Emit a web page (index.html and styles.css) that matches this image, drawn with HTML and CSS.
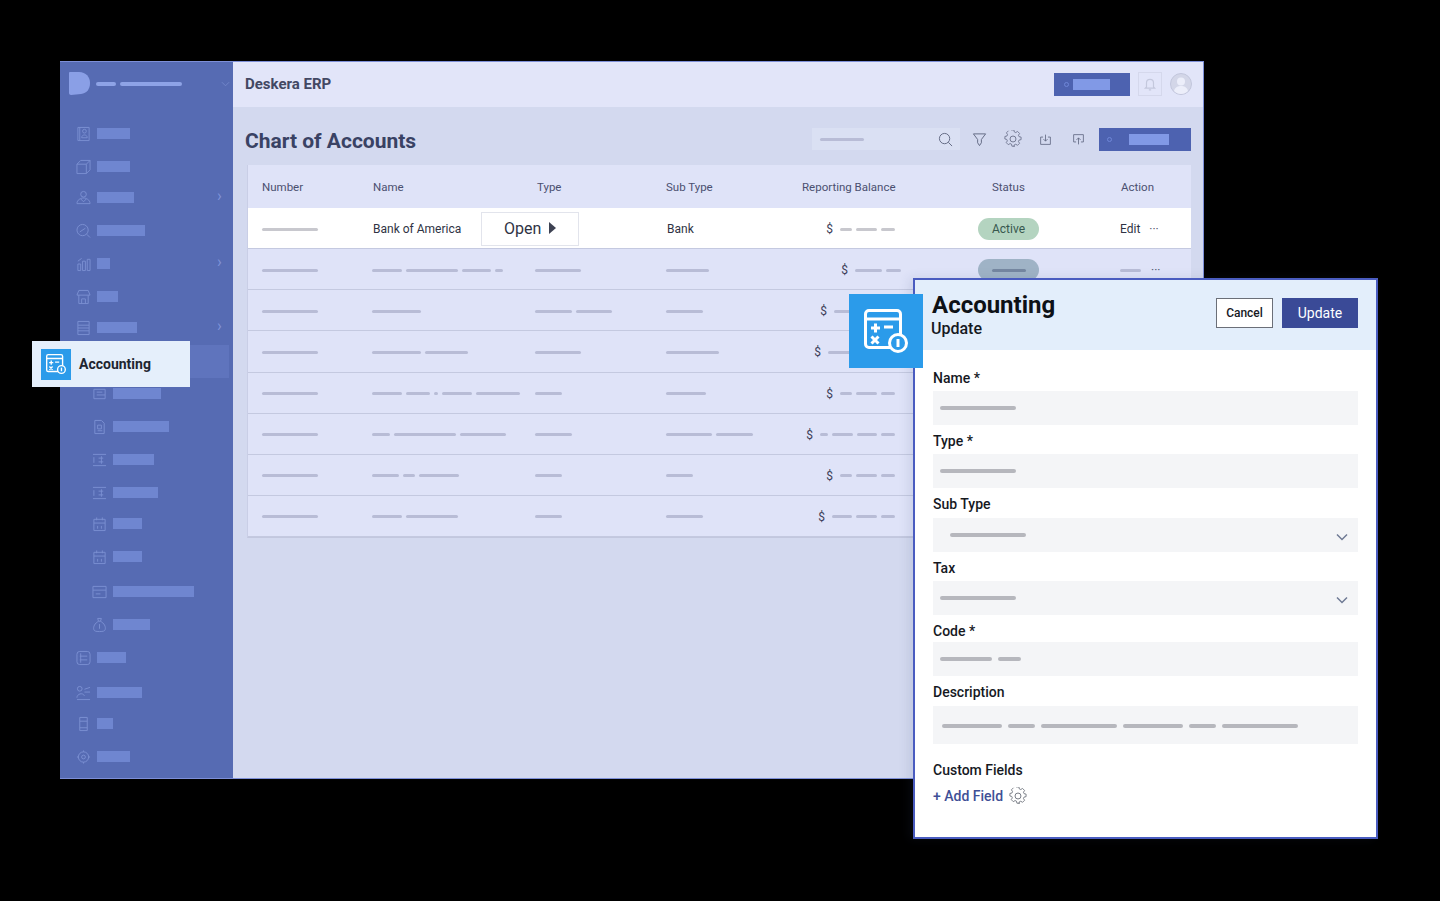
FILE: index.html
```html
<!DOCTYPE html>
<html lang="en">
<head>
    <meta charset="UTF-8">
    <title>Deskera ERP - Accounting</title>
    <link rel="stylesheet" href="styles.css">
</head>
<body>
    <svg class="sprites" width="0" height="0">
        <symbol id="calc" viewBox="0 0 44 44">
            <rect x="1.5" y="1.5" width="35" height="37" rx="3.5" fill="none" stroke="#fff" stroke-width="3"/>
            <path d="M1.5 10h35M7 19h9M11.500 14.500v9M20 18h9M7.500 27.500l7 7M14.500 27.500l-7 7" fill="none" stroke="#fff" stroke-width="3"/>
            <circle cx="34" cy="34" r="8.500" fill="#2b9bea" stroke="#fff" stroke-width="3"/>
            <path d="M34 30v8" fill="none" stroke="#fff" stroke-width="3"/>
        </symbol>
        <symbol id="gear" viewBox="0 0 20 20">
            <path d="M8.300 1.500h3.400l.5 2.400 1.700.7 2.100-1.300 2.400 2.400-1.300 2.100.7 1.700 2.400.5v3l-2.400.5-.7 1.700 1.300 2.100-2.400 2.400-2.100-1.300-1.700.7-.5 2.400" transform="translate(0 -1.500) scale(.94)" fill="none" stroke="currentColor"/>
            <path d="M11.700 18.500H8.300l-.5-2.400-1.700-.7-2.100 1.300-2.400-2.400 1.300-2.100-.7-1.700L0 10V7l2.400-.5.7-1.700L1.800 2.700 4.200.3" transform="translate(1 .6) scale(.94)" fill="none" stroke="currentColor"/>
            <circle cx="10" cy="10" r="3.300" fill="none" stroke="currentColor"/>
        </symbol>
        <symbol id="i-contact" viewBox="0 0 16 16"><path d="M2 1h12v14H2zM4 1v14M9 7a2 2 0 1 0 0-4 2 2 0 0 0 0 4zM6 12c0-4 6-4 6 0z"/></symbol>
        <symbol id="i-box" viewBox="0 0 16 16"><path d="M1 5h10v10H1zM1 5l4-4h10v10l-4 4M11 5l4-4"/></symbol>
        <symbol id="i-people" viewBox="0 0 16 16"><path d="M8 7a3 3 0 1 0 0-6 3 3 0 0 0 0 6zM1 14c0-4 4-6 7-6s7 2 7 6zM5 9l3 3 3-3"/></symbol>
        <symbol id="i-search" viewBox="0 0 16 16"><path d="M7 13A6 6 0 1 0 7 1a6 6 0 0 0 0 12zM11.500 11.500L15 15M4 9l6-4"/></symbol>
        <symbol id="i-chart" viewBox="0 0 16 16"><path d="M2 15V8h3v7zM7 15V5h3v10zM12 15V3h3v12zM2 5l4-3"/></symbol>
        <symbol id="i-shop" viewBox="0 0 16 16"><path d="M3 6v9h10V6M1 6l2-5h10l2 5zM6 15v-5h4v5"/></symbol>
        <symbol id="i-list" viewBox="0 0 16 16"><path d="M2 1h12v14H2zM2 5h12M2 8h12M2 11h12"/></symbol>
        <symbol id="i-doc" viewBox="0 0 16 16"><path d="M2 3h12v10H2zM5 6h6M5 9h9"/></symbol>
        <symbol id="i-page" viewBox="0 0 16 16"><path d="M3 1h7l3 3v11H3zM6 6h4v4H6zM6 12h5"/></symbol>
        <symbol id="i-cash" viewBox="0 0 16 16"><path d="M1 2h14M1 14h14M2 5v6M7 6h5M7 10h5M10 4v8"/></symbol>
        <symbol id="i-cal" viewBox="0 0 16 16"><path d="M2 3h12v12H2zM2 7h12M5 1v3M11 1v3M6 10v3M10 10v3"/></symbol>
        <symbol id="i-wide" viewBox="0 0 16 16"><path d="M1 2h14v12H1zM1 6h14M4 10h5"/></symbol>
        <symbol id="i-bag" viewBox="0 0 16 16"><path d="M6 1h4L9 4H7zM7 4C3 6 1 10 2 13c.5 1.500 2 2 6 2s5.500-.5 6-2c1-3-1-7-5-9M8 7v5"/></symbol>
        <symbol id="i-form" viewBox="0 0 16 16"><rect x="1" y="1" width="14" height="14" rx="3"/><path d="M4 6h8M4 10h8M5 3v10"/></symbol>
        <symbol id="i-team" viewBox="0 0 16 16"><path d="M4 6a2.500 2.500 0 1 0 0-5 2.500 2.500 0 0 0 0 5zM1 13c0-4 6-6 8-2M9 4l6-2M9 7h6M1 15h14"/></symbol>
        <symbol id="i-phone" viewBox="0 0 16 16"><path d="M4 1h8v14H4zM4 5h8M4 12h8"/></symbol>
        <symbol id="i-gear" viewBox="0 0 16 16"><circle cx="8" cy="8" r="5.500"/><circle cx="8" cy="8" r="2"/><path d="M8 1v1.500M8 13.500V15M1 8h1.500M13.500 8H15"/></symbol>
    </svg>

    <div class="app">
        <aside class="sidebar">
            <div class="brand">
                <svg class="logo" viewBox="0 0 22 24"><path d="M1 0h9c7 0 11 5 11 11s-3 10-9 11l-10 1c-1 0-2-1-2-2V1c0-.5.5-1 1-1z"/></svg>
                <span class="brand-line w20"></span>
                <span class="brand-line w62"></span>
                <svg class="brand-caret" viewBox="0 0 10 6"><path d="M1 1l4 4 4-4"/></svg>
            </div>
            <nav class="menu">
                <div class="item"><svg class="ico"><use href="#i-contact"/></svg><span class="bar w33"></span></div>
                <div class="item short"><svg class="ico"><use href="#i-box"/></svg><span class="bar w33"></span></div>
                <div class="item"><svg class="ico"><use href="#i-people"/></svg><span class="bar w37"></span><span class="more">›</span></div>
                <div class="item"><svg class="ico"><use href="#i-search"/></svg><span class="bar w48"></span></div>
                <div class="item"><svg class="ico"><use href="#i-chart"/></svg><span class="bar w13"></span><span class="more">›</span></div>
                <div class="item short"><svg class="ico"><use href="#i-shop"/></svg><span class="bar w21"></span></div>
                <div class="item tall"><svg class="ico"><use href="#i-list"/></svg><span class="bar w40"></span><span class="more">›</span></div>
                <div class="item short active"></div>
                <div class="item sub"><svg class="ico"><use href="#i-doc"/></svg><span class="bar w48"></span></div>
                <div class="item sub"><svg class="ico"><use href="#i-page"/></svg><span class="bar w56"></span></div>
                <div class="item sub"><svg class="ico"><use href="#i-cash"/></svg><span class="bar w41"></span></div>
                <div class="item sub short"><svg class="ico"><use href="#i-cash"/></svg><span class="bar w45"></span></div>
                <div class="item sub"><svg class="ico"><use href="#i-cal"/></svg><span class="bar w29"></span></div>
                <div class="item sub tall"><svg class="ico"><use href="#i-cal"/></svg><span class="bar w29"></span></div>
                <div class="item sub"><svg class="ico"><use href="#i-wide"/></svg><span class="bar w81"></span></div>
                <div class="item sub"><svg class="ico"><use href="#i-bag"/></svg><span class="bar w37"></span></div>
                <div class="item tall"><svg class="ico"><use href="#i-form"/></svg><span class="bar w29"></span></div>
                <div class="item short"><svg class="ico"><use href="#i-team"/></svg><span class="bar w45"></span></div>
                <div class="item"><svg class="ico"><use href="#i-phone"/></svg><span class="bar w16"></span></div>
                <div class="item"><svg class="ico"><use href="#i-gear"/></svg><span class="bar w33"></span></div>
            </nav>
        </aside>

        <main class="main">
            <header class="topbar">
                <div class="app-name">Deskera ERP</div>
                <div class="top-actions">
                    <div class="blue-btn small"><span class="blue-dot"></span><span class="blue-bar w37"></span></div>
                    <div class="bell">
                        <svg viewBox="0 0 12 12"><path d="M3 8.500V5a3 3 0 0 1 6 0v3.500l1 1H2zM5 11h2"/></svg>
                    </div>
                    <svg class="avatar" viewBox="0 0 22 22">
                        <circle cx="11" cy="11" r="10.500" fill="#d3d6e8" stroke="#c2c6dc"/>
                        <circle cx="11" cy="8.500" r="4" fill="#eceefa"/>
                        <path d="M4 18c1-4 4-5 7-5s6 1 7 5c-2 2-4 3-7 3s-5-1-7-3z" fill="#eceefa"/>
                    </svg>
                </div>
            </header>

            <section class="content">
                <div class="page-head">
                    <h1>Chart of Accounts</h1>
                    <div class="tools">
                        <div class="search">
                            <span class="dash w44"></span>
                            <svg class="tool-ico" viewBox="0 0 16 16"><path d="M7 12.500a5.500 5.500 0 1 0 0-11 5.500 5.500 0 0 0 0 11zM11 11l4 4"/></svg>
                        </div>
                        <div class="tool"><svg class="tool-ico" viewBox="0 0 16 16"><path d="M1.500 2h13L10 8v3.500L8 14.500 6 11.500V8z"/></svg></div>
                        <div class="tool gear-tool"><svg class="tool-gear"><use href="#gear"/></svg></div>
                        <div class="tool"><svg class="tool-ico thin" viewBox="0 0 16 16"><path d="M5 5H2v9h12V5h-3M8 2v8M5.500 7.500L8 10l2.500-2.500"/></svg></div>
                        <div class="tool"><svg class="tool-ico thin" viewBox="0 0 16 16"><path d="M5 11H2V2h12v9h-3M8 14V6M5.500 8.500L8 6l2.500 2.500"/></svg></div>
                        <div class="blue-btn wide"><span class="blue-dot"></span><span class="blue-bar w40"></span></div>
                    </div>
                </div>

                <div class="table">
                    <div class="row head">
                        <div>Number</div><div>Name</div><div>Type</div><div>Sub Type</div><div>Reporting Balance</div><div>Status</div><div>Action</div>
                    </div>

                    <div class="row first">
                        <div class="dashes"><span class="dash w56"></span></div>
                        <div>Bank of America</div>
                        <div></div>
                        <div class="bank">Bank</div>
                        <div class="balance"><span class="cur">$</span><span class="dash w12"></span><span class="dash w21"></span><span class="dash w14"></span></div>
                        <div><span class="pill">Active</span></div>
                        <div class="action">Edit <span class="dots">···</span></div>
                        <div class="open-btn">Open <span class="tri"></span></div>
                    </div>

                    <div class="row">
                        <div class="dashes"><span class="dash w56"></span></div>
                        <div class="dashes"><span class="dash w30"></span><span class="dash w52"></span><span class="dash w29"></span><span class="dash w8"></span></div>
                        <div class="dashes"><span class="dash w46"></span></div>
                        <div class="dashes"><span class="dash w43"></span></div>
                        <div class="balance pushed"><span class="cur">$</span><span class="dash w27"></span><span class="dash w15"></span></div>
                        <div><span class="pill blank"><span class="dash dark w34"></span></span></div>
                        <div class="action dashes"><span class="dash w21"></span><span class="dots">···</span></div>
                    </div>

                    <div class="row">
                        <div class="dashes"><span class="dash w56"></span></div>
                        <div class="dashes"><span class="dash w49"></span></div>
                        <div class="dashes"><span class="dash w37"></span><span class="dash w36"></span></div>
                        <div class="dashes"><span class="dash w37"></span></div>
                        <div class="balance"><span class="cur">$</span><span class="dash w18"></span><span class="dash w21"></span><span class="dash w14"></span></div>
                    </div>

                    <div class="row">
                        <div class="dashes"><span class="dash w56"></span></div>
                        <div class="dashes"><span class="dash w49"></span><span class="dash w43"></span></div>
                        <div class="dashes"><span class="dash w46"></span></div>
                        <div class="dashes"><span class="dash w53"></span></div>
                        <div class="balance"><span class="cur">$</span><span class="dash w24"></span><span class="dash w21"></span><span class="dash w14"></span></div>
                    </div>

                    <div class="row">
                        <div class="dashes"><span class="dash w56"></span></div>
                        <div class="dashes"><span class="dash w30"></span><span class="dash w24"></span><span class="dash w4"></span><span class="dash w30"></span><span class="dash w44"></span></div>
                        <div class="dashes"><span class="dash w27"></span></div>
                        <div class="dashes"><span class="dash w40"></span></div>
                        <div class="balance"><span class="cur">$</span><span class="dash w12"></span><span class="dash w21"></span><span class="dash w14"></span></div>
                    </div>

                    <div class="row">
                        <div class="dashes"><span class="dash w56"></span></div>
                        <div class="dashes"><span class="dash w18"></span><span class="dash w62"></span><span class="dash w46"></span></div>
                        <div class="dashes"><span class="dash w37"></span></div>
                        <div class="dashes"><span class="dash w46"></span><span class="dash w37"></span></div>
                        <div class="balance"><span class="cur">$</span><span class="dash w8"></span><span class="dash w21"></span><span class="dash w20"></span><span class="dash w14"></span></div>
                    </div>

                    <div class="row">
                        <div class="dashes"><span class="dash w56"></span></div>
                        <div class="dashes"><span class="dash w27"></span><span class="dash w12"></span><span class="dash w40"></span></div>
                        <div class="dashes"><span class="dash w27"></span></div>
                        <div class="dashes"><span class="dash w27"></span></div>
                        <div class="balance"><span class="cur">$</span><span class="dash w12"></span><span class="dash w21"></span><span class="dash w14"></span></div>
                    </div>

                    <div class="row">
                        <div class="dashes"><span class="dash w56"></span></div>
                        <div class="dashes"><span class="dash w30"></span><span class="dash w52"></span></div>
                        <div class="dashes"><span class="dash w27"></span></div>
                        <div class="dashes"><span class="dash w37"></span></div>
                        <div class="balance"><span class="cur">$</span><span class="dash w20"></span><span class="dash w21"></span><span class="dash w14"></span></div>
                    </div>
                </div>
            </section>
        </main>
    </div>

    <div class="callout">
        <div class="callout-icon"><svg><use href="#calc"/></svg></div>
        <span>Accounting</span>
    </div>

    <div class="popup">
        <div class="popup-icon"><svg><use href="#calc"/></svg></div>
        <header class="popup-head">
            <div class="popup-titles">
                <div class="popup-title">Accounting</div>
                <div class="popup-sub">Update</div>
            </div>
            <button class="btn-cancel">Cancel</button>
            <button class="btn-update">Update</button>
        </header>
        <form class="form">
            <label class="label">Name *</label>
            <div class="input"><span class="dash soft w76"></span></div>

            <label class="label">Type *</label>
            <div class="input"><span class="dash soft w76"></span></div>

            <label class="label label-tall">Sub Type</label>
            <div class="input select"><span class="dash soft w76"></span><svg class="caret" viewBox="0 0 12 8"><path d="M1 1.500l5 5 5-5"/></svg></div>

            <label class="label">Tax</label>
            <div class="input plain-select"><span class="dash soft w76"></span><svg class="caret" viewBox="0 0 12 8"><path d="M1 1.500l5 5 5-5"/></svg></div>

            <label class="label label-short">Code *</label>
            <div class="input"><span class="dash soft w52"></span><span class="dash soft w23"></span></div>

            <label class="label label-tall">Description</label>
            <div class="input textarea">
                <span class="dash soft w60"></span><span class="dash soft w27"></span><span class="dash soft w76"></span><span class="dash soft w60"></span><span class="dash soft w27"></span><span class="dash soft w76"></span>
            </div>

            <div class="label custom">Custom Fields</div>
            <div class="add-field">+ Add Field <svg class="add-gear"><use href="#gear"/></svg></div>
        </form>
    </div>
</body>
</html>
```
FILE: styles.css
```css
* {
    box-sizing: border-box;
}
body {
    margin: 0;
    height: 901px;
    overflow: hidden;
    background-color: #000;
    font-family: Roboto, Arial, sans-serif;
    position: relative;
}
.sprites {
    position: absolute;
}

/* widths for the placeholder bars */
.w4 { width: 4px; }
.w8 { width: 8px; }
.w10 { width: 10px; }
.w12 { width: 12px; }
.w13 { width: 13px; }
.w14 { width: 14px; }
.w15 { width: 15px; }
.w16 { width: 16px; }
.w18 { width: 18px; }
.w20 { width: 20px; }
.w21 { width: 21px; }
.w23 { width: 23px; }
.w24 { width: 24px; }
.w27 { width: 27px; }
.w28 { width: 28px; }
.w29 { width: 29px; }
.w30 { width: 30px; }
.w33 { width: 33px; }
.w34 { width: 34px; }
.w36 { width: 36px; }
.w37 { width: 37px; }
.w40 { width: 40px; }
.w41 { width: 41px; }
.w43 { width: 43px; }
.w44 { width: 44px; }
.w45 { width: 45px; }
.w46 { width: 46px; }
.w48 { width: 48px; }
.w49 { width: 49px; }
.w52 { width: 52px; }
.w53 { width: 53px; }
.w56 { width: 56px; }
.w60 { width: 60px; }
.w62 { width: 62px; }
.w76 { width: 76px; }
.w81 { width: 81px; }

/* app window */
.app {
    position: absolute;
    left: 60px;
    top: 61px;
    width: 1144px;
    height: 718px;
    display: flex;
    border: 1px solid #7d8fd8;
    border-left: none;
}
.sidebar {
    width: 173px;
    flex-shrink: 0;
    background-color: #566bb3;
}
.brand {
    height: 44px;
    margin-bottom: 20px;
    padding-left: 9px;
    display: flex;
    align-items: center;
    gap: 4px;
}
.logo {
    width: 22px;
    height: 24px;
    fill: #8a9fe6;
    margin-right: 1px;
}
.brand-line {
    height: 4px;
    border-radius: 2px;
    background-color: #8ea3e6;
}
.brand-caret {
    width: 9px;
    height: 6px;
    margin-left: 35px;
    fill: none;
    stroke: #7488cb;
}
.item {
    height: 33px;
    margin-left: 16px;
    display: flex;
    align-items: flex-start;
    gap: 6px;
    position: relative;
}
.item.short {
    height: 31px;
}
.item.tall {
    height: 35px;
}
.item.sub {
    margin-left: 32px;
}
.item.active {
    width: 159px;
    height: 33px;
    margin-left: 10px;
    margin-top: -10px;
    margin-bottom: 8px;
    background-color: #5f74bd;
}
.ico {
    width: 15px;
    height: 16px;
    fill: none;
    stroke: #7c90d2;
    stroke-width: 1;
    flex-shrink: 0;
}
.bar {
    height: 11px;
    margin-top: 2px;
    background-color: #6f86d0;
}
.more {
    position: absolute;
    left: 141px;
    top: -4px;
    color: #8094d8;
    font-size: 16px;
}

/* main area */
.main {
    flex: 1;
    background-color: #d3d9ef;
    display: flex;
    flex-direction: column;
}
.topbar {
    height: 45px;
    background-color: #e2e5f9;
    padding: 0 11px 2px 12px;
    display: flex;
    align-items: center;
    justify-content: space-between;
}
.app-name {
    font-size: 15px;
    font-weight: 700;
    color: #434863;
}
.top-actions {
    display: flex;
    align-items: center;
    gap: 8px;
}
.blue-btn {
    background-color: #4d62b0;
    display: flex;
    align-items: center;
}
.blue-btn.small {
    width: 76px;
    height: 23px;
    margin-top: 2px;
    padding-left: 10px;
    gap: 4px;
}
.blue-btn.wide {
    width: 92px;
    height: 23px;
    margin-left: 4px;
    margin-top: 1px;
    padding-left: 8px;
    gap: 17px;
}
.blue-dot {
    width: 5px;
    height: 5px;
    border: 1px solid #6f86d8;
    border-radius: 50%;
}
.blue-bar {
    height: 11px;
    background-color: #8199e6;
}
.bell {
    width: 24px;
    height: 24px;
    border: 1px solid #d5d8ec;
    padding: 4px;
}
.bell svg {
    display: block;
    fill: none;
    stroke: #c4c8dd;
}
.avatar {
    width: 22px;
    height: 22px;
}

.content {
    flex: 1;
    padding: 20px 12px 0 12px;
}
.page-head {
    height: 38px;
    display: flex;
    align-items: flex-start;
    justify-content: space-between;
}
.page-head h1 {
    margin: 0;
    font-size: 21px;
    line-height: 28px;
    font-weight: 700;
    color: #394264;
}
.tools {
    display: flex;
    align-items: flex-start;
}
.search {
    width: 148px;
    height: 22px;
    margin-top: 1px;
    margin-right: 3px;
    padding: 0 7px 0 8px;
    background-color: #dae0f3;
    display: flex;
    align-items: center;
    justify-content: space-between;
}
.tool {
    width: 33px;
    height: 22px;
    margin-top: 1px;
    display: flex;
    align-items: center;
    justify-content: center;
}
.tool-ico {
    width: 15px;
    height: 15px;
    fill: none;
    stroke: #5f6680;
}
.tool-ico.thin {
    width: 13px;
    height: 13px;
}
.tool-gear {
    width: 18px;
    height: 18px;
    color: #6a7089;
}

/* table */
.table {
    margin-left: 2px;
    width: 944px;
    background-color: #dfe3f8;
    border-left: 1px solid #c9cee6;
    border-bottom: 1px solid #c2c7de;
}
.row {
    height: 41.125px;
    padding: 2px 0 0 14px;
    display: grid;
    grid-template-columns: 111px 164px 129px 136px 190px 129px 70px;
    align-items: center;
    font-size: 12px;
    color: #2f3344;
    border-bottom: 1px solid #c4c9e0;
    position: relative;
}
.row.head {
    height: 43px;
    padding-top: 1px;
    font-size: 11.5px;
    color: #4b5070;
    border-bottom: none;
}
.row.first {
    background-color: #fff;
}
.row.first .dash {
    background-color: #c8c8ce;
}
.bank {
    margin-left: 1px;
}
.dashes {
    display: flex;
    align-items: center;
    gap: 4px;
    margin-left: -1px;
}
.row > .dashes:nth-child(1), .row > .dashes:nth-child(4) {
    margin-left: 0;
}
.row > .dashes:nth-child(3) {
    margin-left: -2px;
}
.dash {
    height: 3px;
    flex-shrink: 0;
    border-radius: 2px;
    background-color: #b8bcd6;
}
.dash.dark {
    background-color: #7587a0;
}
.dash.soft {
    height: 4px;
    background-color: #b6b7bd;
}
.balance {
    width: 93px;
    display: flex;
    align-items: center;
    justify-content: flex-end;
    gap: 4px;
}
.balance.pushed {
    margin-left: 6px;
}
.cur {
    margin-right: 3px;
    font-size: 12px;
    color: #3c4058;
}
.pill {
    width: 61px;
    height: 22px;
    margin-left: -14px;
    border-radius: 11px;
    background-color: #b4d4c0;
    color: #37584e;
    display: flex;
    align-items: center;
    justify-content: center;
}
.pill.blank {
    background-color: #9fb3c6;
}
.action {
    margin-left: -1px;
}
.dots {
    margin-left: 6px;
    font-size: 12px;
    color: #555a70;
}
.open-btn {
    position: absolute;
    left: 233px;
    top: 4px;
    width: 98px;
    height: 34px;
    padding: 0 0 2px 22px;
    background-color: #fff;
    border: 1px solid #e2e4ec;
    font-size: 16px;
    color: #2f3344;
    display: flex;
    align-items: center;
    gap: 8px;
}
.tri {
    border-left: 7px solid #3d4152;
    border-top: 6px solid transparent;
    border-bottom: 6px solid transparent;
}

/* callout on the sidebar */
.callout {
    position: absolute;
    left: 32px;
    top: 341px;
    width: 158px;
    height: 46px;
    padding-left: 9px;
    background-color: #e5effb;
    display: flex;
    align-items: center;
    gap: 8px;
    font-size: 14px;
    font-weight: 700;
    color: #1e2530;
}
.callout-icon {
    width: 30px;
    height: 31px;
    padding: 5px;
    background-color: #2b9bea;
}
.callout-icon svg {
    display: block;
    width: 20px;
    height: 20px;
}

/* update panel */
.popup {
    position: absolute;
    left: 913px;
    top: 278px;
    width: 465px;
    height: 561px;
    background-color: #fff;
    border: 2px solid #4a5cc0;
    box-shadow: -4px 0 10px rgba(60, 70, 120, .12);
}
.popup-icon {
    position: absolute;
    left: -66px;
    top: 14px;
    width: 74px;
    height: 74px;
    padding: 15px;
    background-color: #2b9bea;
    z-index: 1;
}
.popup-icon svg {
    display: block;
    width: 44px;
    height: 44px;
}
.popup-head {
    height: 70px;
    padding: 18px 18px 0 16px;
    background-color: #e3eefb;
    display: flex;
    align-items: flex-start;
}
.popup-titles {
    flex: 1;
    margin-top: -7px;
}
.popup-title {
    margin-left: 1px;
    font-size: 24px;
    line-height: 28px;
    font-weight: 700;
    color: #0e1116;
}
.popup-sub {
    font-size: 16px;
    line-height: 20px;
    font-weight: 500;
    color: #16191f;
}
.btn-cancel, .btn-update {
    height: 30px;
    padding: 0;
    font-family: Roboto, Arial, sans-serif;
}
.btn-cancel {
    width: 57px;
    background-color: #fff;
    border: 1px solid #6b6f78;
    font-size: 12px;
    font-weight: 500;
    color: #16191f;
}
.btn-update {
    width: 76px;
    margin-left: 9px;
    background-color: #3a4a97;
    border: none;
    font-size: 14px;
    color: #fff;
}
.form {
    padding: 20px 18px 0 18px;
}
.label {
    display: block;
    height: 21px;
    font-size: 14px;
    line-height: 16px;
    font-weight: 500;
    color: #16191f;
}
.label-tall {
    height: 22px;
}
.label-short {
    height: 19px;
}
.input {
    height: 34px;
    margin-bottom: 8px;
    padding: 0 7px;
    background-color: #f4f5f7;
    display: flex;
    align-items: center;
    gap: 6px;
}
.input.select {
    padding-left: 17px;
}
.input.textarea {
    height: 38px;
    padding: 2px 0 0 9px;
}
.caret {
    width: 12px;
    height: 8px;
    margin-left: auto;
    margin-right: 3px;
    margin-top: 3px;
    fill: none;
    stroke: #6f7a94;
    stroke-width: 1.500;
}
.label.custom {
    margin-top: 18px;
    height: 25px;
}
.add-field {
    display: flex;
    align-items: center;
    gap: 6px;
    font-size: 14px;
    font-weight: 500;
    color: #3f4f96;
}
.add-gear {
    width: 18px;
    height: 18px;
    color: #6a6e78;
}
```
